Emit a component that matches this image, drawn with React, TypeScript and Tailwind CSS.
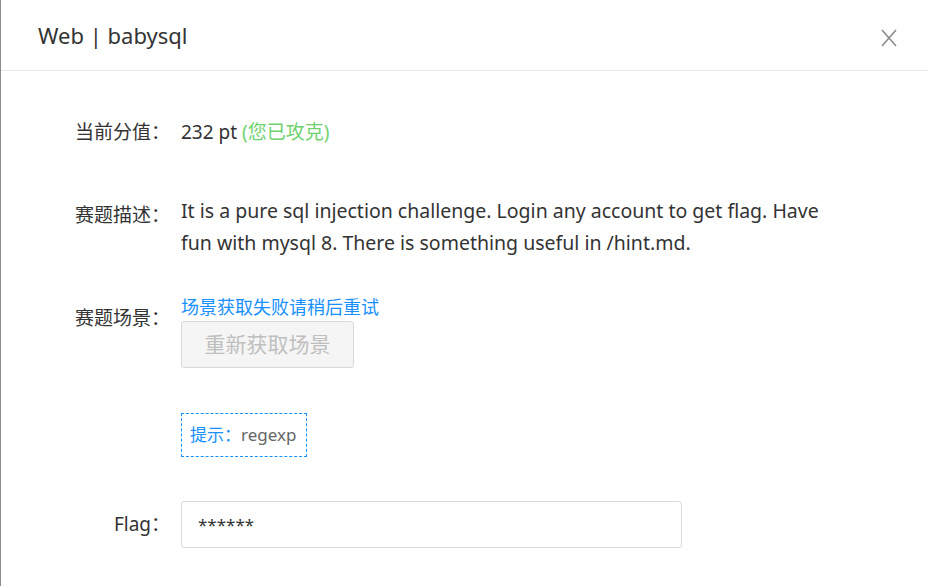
export default function App() {
  const font = "font-['Segoe_UI','Noto_Sans','Noto_Sans_CJK_SC',sans-serif]";
  return (
    <div className={`w-[928px] h-[586px] overflow-hidden bg-white border-l border-[#8a8a8a] text-[#333] ${font}`}>
      {/* Header */}
      <div className="h-[71px] flex items-center justify-between pl-[37px] pr-[30px] border-b border-[#e8e8e8]">
        <h2 className="text-[22px] leading-none text-[#333]">Web | babysql</h2>
        <button className="w-[18px] h-[18px] mt-[6px] text-[#8c8c8c]">
          <svg viewBox="0 0 18 18" className="w-[18px] h-[18px]" fill="none" stroke="currentColor" strokeWidth="1.6">
            <path d="M2 1 L16 17 M16 1 L2 17" />
          </svg>
        </button>
      </div>

      <div className="pt-[45px] text-[19px]">
        {/* Score */}
        <div className="flex">
          <div className="w-[169px] text-right leading-[32px]">当前分值：</div>
          <div className="ml-[11px] leading-[32px]">
            232 pt <span className="text-[#6fd26f]">(您已攻克)</span>
          </div>
        </div>

        {/* Description */}
        <div className="flex mt-[47px]">
          <div className="w-[169px] text-right leading-[32px] mt-[4px]">赛题描述：</div>
          <div className="ml-[11px] w-[648px] leading-[32px] text-[19.5px]">
            It is a pure sql injection challenge. Login any account to get flag. Have fun with mysql 8. There is something useful in /hint.md.
          </div>
        </div>

        {/* Scene */}
        <div className="flex mt-[36px]">
          <div className="w-[169px] text-right leading-[32px] mt-[7px]">赛题场景：</div>
          <div className="ml-[11px] flex flex-col items-start">
            <span className="text-[18px] leading-[24px] text-[#1890ff]">场景获取失败请稍后重试</span>
            <button className="mt-[2px] w-[173px] h-[47px] rounded-[3px] border border-[#d9d9d9] bg-[#f5f5f5] text-[21px] text-[#bfbfbf]">
              重新获取场景
            </button>
            <div className="mt-[45px] w-[126px] h-[44px] border border-dashed border-[#1890ff] flex items-center pl-[8px] text-[17px]">
              <span className="text-[#1890ff]">提示：</span>
              <span className="text-[#666]">regexp</span>
            </div>
          </div>
        </div>

        {/* Flag */}
        <div className="flex mt-[44px] items-center">
          <div className="w-[169px] text-right">Flag：</div>
          <div className="ml-[11px] w-[501px] h-[47px] rounded-[3px] border border-[#d9d9d9] flex items-center pl-[16px] text-[17px] text-[#333]">
            ******
          </div>
        </div>
      </div>
    </div>
  );
}
